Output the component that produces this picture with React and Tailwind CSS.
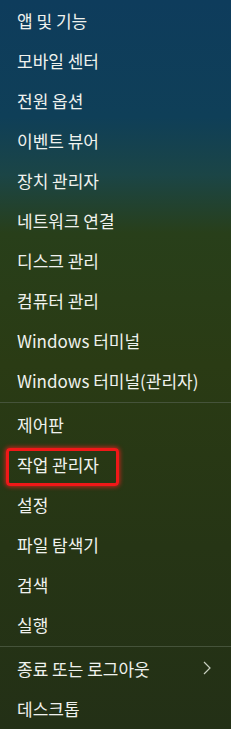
import React from 'react';

// Win+X 메뉴
const groupA = [
  '앱 및 기능',
  '모바일 센터',
  '전원 옵션',
  '이벤트 뷰어',
  '장치 관리자',
  '네트워크 연결',
  '디스크 관리',
  '컴퓨터 관리',
  'Windows 터미널',
  'Windows 터미널(관리자)',
];

const groupB = ['제어판', '작업 관리자', '설정', '파일 탐색기', '검색', '실행'];

const Item = ({ label, highlight, arrow }) => (
  <div className="h-10 flex items-center pl-[17px] pr-[20px] relative">
    {highlight && (
      <span className="absolute left-[6px] top-[4px] w-[113px] h-[38px] rounded-[4px] border-[3px] border-[#f01818] shadow-[0_0_4px_1px_rgba(255,30,30,0.7)]"></span>
    )}
    <span className="relative flex-1 text-[17px] leading-none text-[#f0f2ee] whitespace-nowrap">{label}</span>
    {arrow && (
      <svg width="8" height="14" viewBox="0 0 8 14" className="relative">
        <path d="M1 1 L7 7 L1 13" fill="none" stroke="#c8cfc0" strokeWidth="1.2" />
      </svg>
    )}
  </div>
);

const Divider = () => (
  <div className="py-[1.5px]">
    <div className="h-px bg-[#45533a]"></div>
  </div>
);

export default function App() {
  return (
    <div
      className="w-[231px] h-[729px] overflow-hidden bg-[linear-gradient(180deg,#0e3c5c_0%,#0f3f58_16%,#1b4546_24%,#283f1a_32%,#2a3b14_50%,#263515_75%,#233016_100%)]"
      style={{ fontFamily: '"Noto Sans CJK KR", "Noto Sans", sans-serif' }}
    >
      {groupA.map((l) => (
        <Item key={l} label={l} />
      ))}
      <Divider />
      {groupB.map((l) => (
        <Item key={l} label={l} highlight={l === '작업 관리자'} />
      ))}
      <Divider />
      <Item label="종료 또는 로그아웃" arrow />
      <Item label="데스크톱" />
    </div>
  );
}
